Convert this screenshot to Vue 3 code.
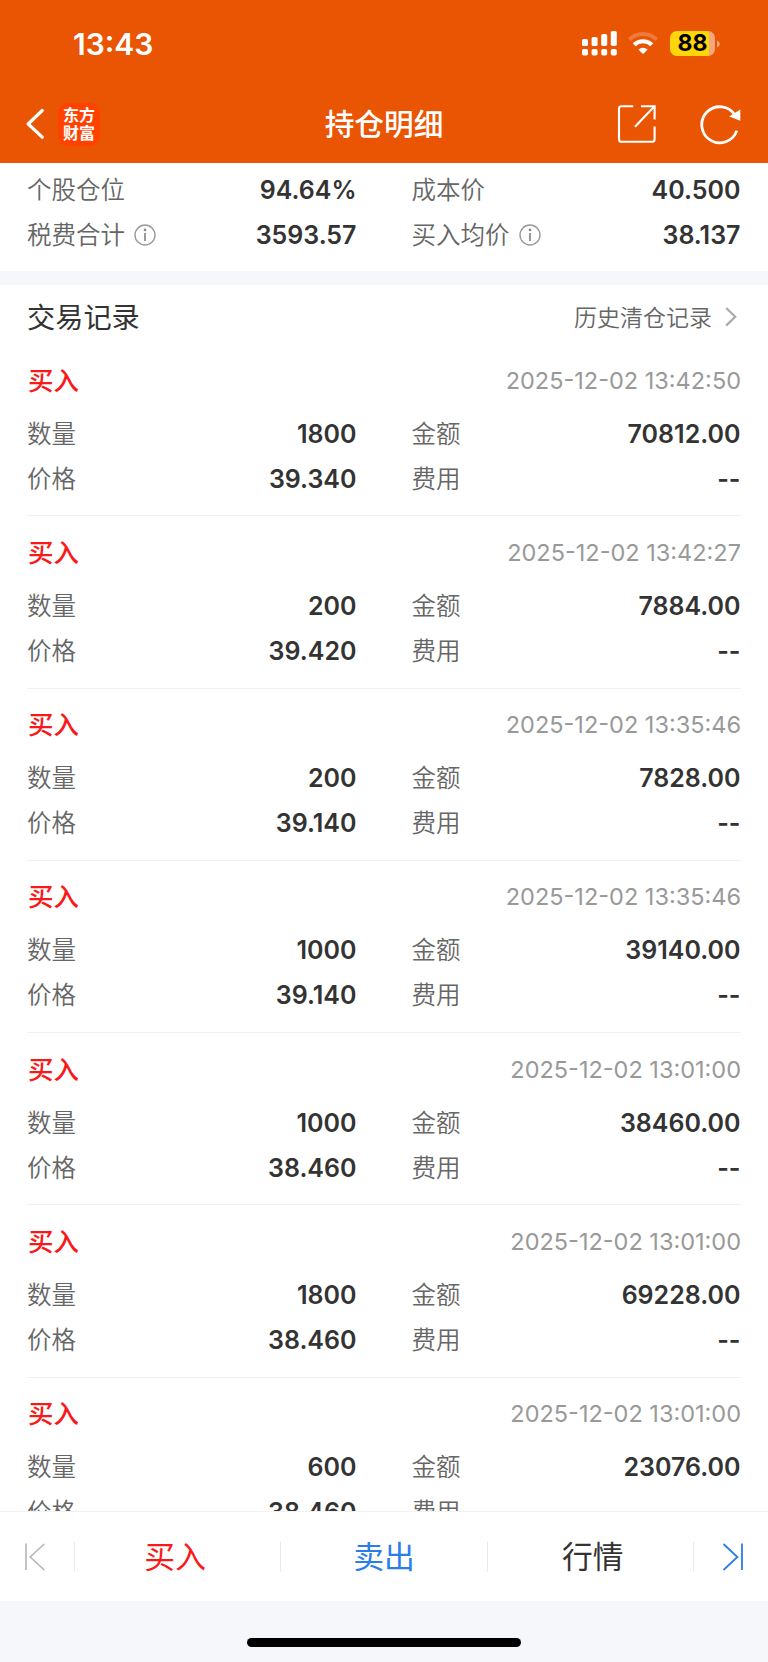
<script setup>
import { ref } from 'vue'

const summary = [
  { label: '个股仓位', value: '94.64%' },
  { label: '成本价', value: '40.500' },
  { label: '税费合计', value: '3593.57', info: true },
  { label: '买入均价', value: '38.137', info: true }
]

const records = ref([
  { time: '2025-12-02 13:42:50', count: '1800', amount: '70812.00', price: '39.340' },
  { time: '2025-12-02 13:42:27', count: '200', amount: '7884.00', price: '39.420' },
  { time: '2025-12-02 13:35:46', count: '200', amount: '7828.00', price: '39.140' },
  { time: '2025-12-02 13:35:46', count: '1000', amount: '39140.00', price: '39.140' },
  { time: '2025-12-02 13:01:00', count: '1000', amount: '38460.00', price: '38.460' },
  { time: '2025-12-02 13:01:00', count: '1800', amount: '69228.00', price: '38.460' },
  { time: '2025-12-02 13:01:00', count: '600', amount: '23076.00', price: '38.460' }
])

function cells(r) {
  return [
    { label: '数量', value: r.count },
    { label: '金额', value: r.amount },
    { label: '价格', value: r.price },
    { label: '费用', value: '--' }
  ]
}
</script>

<template>
  <div class="screen">
    <header class="header">
      <div class="status">
        <span class="clock">13:43</span>
        <div class="status-icons">
          <svg class="signal" width="36" height="25" viewBox="0 0 36 25" fill="#fff">
            <rect x="0" y="8" width="6" height="7" rx="1.6" />
            <rect x="9.6" y="6" width="6" height="9" rx="1.6" />
            <rect x="19.2" y="3" width="6" height="12" rx="1.8" />
            <rect x="28.8" y="0" width="6" height="15" rx="1.8" />
            <rect x="0" y="18" width="6" height="6.6" rx="1.8" />
            <rect x="9.6" y="18" width="6" height="6.6" rx="1.8" />
            <rect x="19.2" y="18" width="6" height="6.6" rx="1.8" />
            <rect x="28.8" y="18" width="6" height="6.6" rx="1.8" />
          </svg>
          <svg class="wifi" width="30" height="23" viewBox="0 0 30 23">
            <path d="M1.4 7.6A19.5 19.5 0 0 1 28.6 7.6" fill="none" stroke="#fff" stroke-opacity=".22" stroke-width="4" />
            <path d="M6.2 12.8A12.6 12.6 0 0 1 23.8 12.8" fill="none" stroke="#fff" stroke-width="4" />
            <path d="M10.4 17.6Q15 13.8 19.6 17.6L15.6 21.6Q15 22.1 14.4 21.6Z" fill="#fff" />
          </svg>
          <div class="battery"><span>88</span></div>
          <svg class="battery-tip" width="3" height="8" viewBox="0 0 3 8">
            <path d="M0 0.5Q2.8 1.5 2.8 4T0 7.5Z" fill="#f6a67c" />
          </svg>
        </div>
      </div>
      <div class="nav">
        <div class="nav-left">
          <svg width="19" height="32" viewBox="0 0 19 32" fill="none" stroke="#fff" stroke-width="3.2" stroke-linecap="round" stroke-linejoin="round">
            <path d="M16.2 2.5L2.2 16L16.2 29.2" />
          </svg>
          <div class="logo"><span>东方</span><span>财富</span></div>
        </div>
        <h1 class="title">持仓明细</h1>
        <div class="nav-right">
          <svg width="40" height="40" viewBox="0 0 40 40" fill="none" stroke="#fff" stroke-width="2.1">
            <path d="M16.2 2.2H4.6Q2 2.2 2 4.8V35.2Q2 37.8 4.6 37.8H35Q37.6 37.8 37.6 35.2V22.6" />
            <path d="M24 2.2H37.6V15.5M37 2.8L18 22.8" />
          </svg>
          <svg width="42" height="42" viewBox="0 0 42 42" fill="none">
            <path d="M36.8 27.6A18 18 0 1 1 35 12.2" stroke="#fff" stroke-width="2.8" />
            <path d="M40.3 6.4V17.7L29.2 13.6Z" fill="#fff" />
          </svg>
        </div>
      </div>
    </header>

    <main class="content">
      <section class="summary grid">
        <div v-for="item in summary" :key="item.label" class="cell">
          <span class="label">{{ item.label }}</span>
          <svg v-if="item.info" class="info" width="22" height="22" viewBox="0 0 22 22">
            <circle cx="11" cy="11" r="10" fill="none" stroke="#999" stroke-width="1.4" />
            <circle cx="11" cy="5.9" r="1.3" fill="#888" />
            <path d="M11 9V17" stroke="#888" stroke-width="1.7" />
          </svg>
          <span class="value">{{ item.value }}</span>
        </div>
      </section>

      <section class="trades">
        <div class="trades-head">
          <h2>交易记录</h2>
          <a class="history">
            <span>历史清仓记录</span>
            <svg width="12" height="22" viewBox="0 0 12 22" fill="none" stroke="#aaa" stroke-width="2.2">
              <path d="M1.2 3L10.2 11.8L1.2 20.6" />
            </svg>
          </a>
        </div>
        <article v-for="(r, i) in records" :key="i" class="record">
          <div class="record-head">
            <span class="type">买入</span>
            <time>{{ r.time }}</time>
          </div>
          <div class="grid">
            <div v-for="c in cells(r)" :key="c.label" class="cell">
              <span class="label">{{ c.label }}</span>
              <span class="value">{{ c.value }}</span>
            </div>
          </div>
        </article>
      </section>
    </main>

    <footer class="footer">
      <div class="tabs">
        <button class="edge">
          <svg width="22" height="28" viewBox="0 0 22 28" fill="none" stroke="#b5b5b5" stroke-width="1.6">
            <path d="M2 0.5V27M20.3 1L6.2 14L20.3 27" />
          </svg>
        </button>
        <button class="tab buy">买入</button>
        <button class="tab sell">卖出</button>
        <button class="tab quote">行情</button>
        <button class="edge next">
          <svg width="22" height="28" viewBox="0 0 22 28" fill="none" stroke="#2b7de9" stroke-width="1.8">
            <path d="M20 0.5V27M1.5 1L15.4 14L1.5 27" />
          </svg>
        </button>
      </div>
      <div class="home"><i></i></div>
    </footer>
  </div>
</template>

<style>
body {
  margin: 0;
  background: #fff;
}
</style>

<style scoped>
.screen {
  width: 768px;
  height: 1662px;
  display: flex;
  flex-direction: column;
  overflow: hidden;
  font-family: Inter, "Noto Sans CJK SC", sans-serif;
  color: #333;
}
.header {
  flex: none;
  height: 163px;
  box-sizing: border-box;
  background: #ea5504;
  color: #fff;
}
.status {
  height: 87px;
  display: flex;
  justify-content: space-between;
  padding: 0 48px 0 73px;
}
.clock {
  line-height: 88px;
  font-size: 30px;
  font-weight: 600;
}
.status-icons {
  display: flex;
  align-items: center;
}
.wifi {
  margin-left: 10px;
}
.battery {
  width: 45px;
  height: 25px;
  margin-left: 12px;
  border-radius: 7px;
  background: linear-gradient(to right, #ffd60a 39px, #f6a67c 39px);
  color: #000;
  text-align: center;
  font-size: 23px;
  font-weight: 700;
  line-height: 25px;
}
.battery-tip {
  margin-left: 2px;
}
.nav {
  height: 74px;
  display: grid;
  grid-template-columns: 1fr auto 1fr;
  align-items: center;
  padding: 0 26px;
}
.nav-left {
  display: flex;
  align-items: center;
  gap: 13px;
}
.logo {
  width: 42px;
  height: 43px;
  box-sizing: border-box;
  border-radius: 10px;
  background: #ff4200;
  display: flex;
  flex-direction: column;
  align-items: center;
  justify-content: center;
  font-size: 16px;
  font-weight: 700;
  line-height: 18px;
}
.title {
  margin: 0;
  font-size: 29.7px;
  font-weight: 500;
  line-height: 44px;
}
.nav-right {
  display: flex;
  align-items: center;
  justify-content: flex-end;
  gap: 43px;
}
.content {
  flex: 1;
  min-height: 0;
  overflow: hidden;
}
.grid {
  display: grid;
  grid-template-columns: 329.5px 329px;
  column-gap: 55px;
  grid-auto-rows: 45px;
}
.summary {
  height: 108px;
  box-sizing: border-box;
  padding: 4px 27px 0;
}
.cell {
  display: flex;
  align-items: center;
}
.label {
  padding-bottom: 3px;
  font-size: 24.5px;
  font-weight: 350;
  color: #666;
}
.info {
  margin-left: 9px;
}
.value {
  margin-left: auto;
  font-size: 25px;
  font-weight: 600;
}
.trades {
  border-top: 14px solid #f6f7fa;
  padding: 0 27px;
}
.trades-head {
  height: 59px;
  padding-top: 2px;
  box-sizing: border-box;
  display: flex;
  align-items: center;
  justify-content: space-between;
}
.trades-head h2 {
  margin: 0;
  font-size: 28.2px;
  font-weight: 400;
}
.history {
  display: flex;
  align-items: center;
  gap: 13px;
  padding-right: 4px;
  font-size: 23px;
  font-weight: 350;
  color: #666;
}
.record {
  height: 172.3px;
  box-sizing: border-box;
  padding-top: 14px;
  border-bottom: 1px solid #f2f2f2;
}
.record-head {
  height: 44px;
  margin-bottom: 9px;
  display: flex;
  align-items: center;
  justify-content: space-between;
}
.type {
  padding: 0 0 4px 1px;
  font-size: 25.5px;
  font-weight: 500;
  color: #fa1919;
}
time {
  font-size: 23.5px;
  color: #999;
}
.footer {
  flex: none;
  height: 151px;
  background: #f6f7fa;
}
.tabs {
  height: 90px;
  box-sizing: border-box;
  border-top: 1px solid #f1f1f1;
  background: #fff;
  display: flex;
  align-items: center;
}
.tabs button {
  height: 30px;
  box-sizing: border-box;
  display: flex;
  align-items: center;
  justify-content: center;
  padding: 0;
  border: 0;
  border-right: 1px solid #eaeaea;
  background: none;
  font-family: inherit;
}
.tabs .edge {
  width: 75px;
  padding-right: 5px;
}
.tabs .next {
  flex: 1;
  border-right: 0;
  padding: 0 0 0 5px;
}
.tabs .tab {
  width: 206.3px;
  padding-bottom: 5px;
  font-size: 30.8px;
  font-weight: 400;
}
.tabs .buy {
  padding-right: 5px;
  color: #fa1919;
}
.tabs .sell {
  color: #2b7de9;
}
.tabs .quote {
  padding-left: 5px;
  color: #333;
}
.home {
  display: flex;
  justify-content: center;
  padding-top: 37px;
}
.home i {
  width: 274px;
  height: 9px;
  border-radius: 5px;
  background: #000;
}
</style>
